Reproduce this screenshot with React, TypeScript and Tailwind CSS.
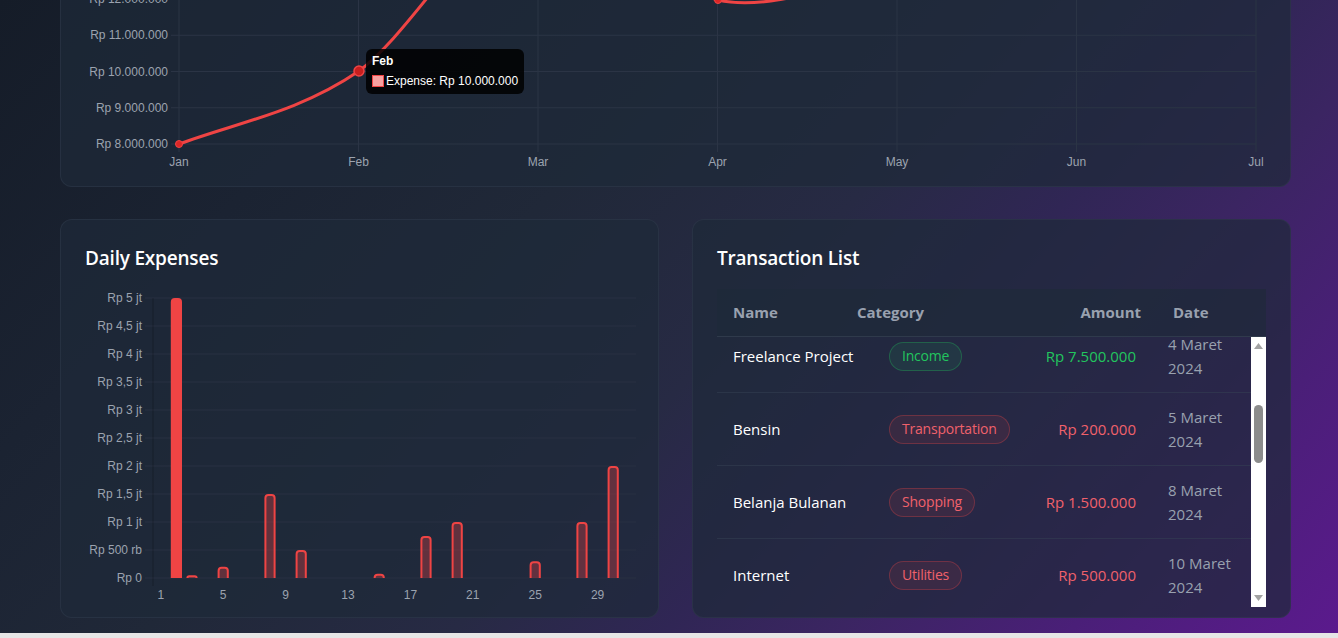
import React from "react";

const months = ["Jan", "Feb", "Mar", "Apr", "May", "Jun", "Jul"];
const monthX = (i: number) => 178 + 179.5 * i;
const valueY = (m: number) => 144 - (m - 8) * 36.25;

// dots as thousand separator, like id-ID
const rupiah = (n: number) => "Rp " + String(n).replace(/\B(?=(\d{3})+(?!\d))/g, ".");

const dayX = (d: number) => 152 + 15.6 * (d - 0.5);
const daily: Record<number, number> = {
  2: 5000000,
  3: 50000,
  5: 200000,
  8: 1500000,
  10: 500000,
  15: 75000,
  18: 750000,
  20: 1000000,
  25: 300000,
  28: 1000000,
  30: 2000000,
};

const dailyTicks = [
  "Rp 0",
  "Rp 500 rb",
  "Rp 1 jt",
  "Rp 1,5 jt",
  "Rp 2 jt",
  "Rp 2,5 jt",
  "Rp 3 jt",
  "Rp 3,5 jt",
  "Rp 4 jt",
  "Rp 4,5 jt",
  "Rp 5 jt",
];

interface Transaction {
  name: string;
  category: string;
  amount: string;
  date: string;
  income?: boolean;
}

const transactions: Transaction[] = [
  { name: "Freelance Project", category: "Income", amount: "Rp 7.500.000", date: "4 Maret 2024", income: true },
  { name: "Bensin", category: "Transportation", amount: "Rp 200.000", date: "5 Maret 2024" },
  { name: "Belanja Bulanan", category: "Shopping", amount: "Rp 1.500.000", date: "8 Maret 2024" },
  { name: "Internet", category: "Utilities", amount: "Rp 500.000", date: "10 Maret 2024" },
];

const chartFont = "'Liberation Sans', Arial, sans-serif";

function MonthlyChart() {
  const line =
    "M178,144 C238,122 298,112 358,71 C418,26 477,-94 537,-91.6 C597,-89.2 680,-8.4 717,0 " +
    "C770,12 836,-19 896,-19.25 C956,-19.5 1016,-100 1076,-109.75 C1136,-120 1195,-140 1255,-146";
  return (
    <div className="relative h-[360px] w-[1183px]">
      <svg width={1183} height={360} viewBox="84 -190 1183 360" fontFamily={chartFont}>
        {[8, 9, 10, 11, 12, 13, 14, 15, 16, 17].map((v) => (
          <g key={v}>
            <line x1={170} x2={1255} y1={valueY(v)} y2={valueY(v)} stroke="#2b3445" strokeWidth={1} />
            <text x={167} y={valueY(v) + 4} textAnchor="end" fontSize={12} fill="#9ca3af">
              {rupiah(v * 1000000)}
            </text>
          </g>
        ))}
        {months.map((m, i) => (
          <g key={m}>
            <line x1={monthX(i)} x2={monthX(i)} y1={-182} y2={152} stroke="#2b3445" strokeWidth={1} />
            <text x={monthX(i)} y={166} textAnchor="middle" fontSize={12} fill="#9ca3af">
              {m}
            </text>
          </g>
        ))}
        <path d={line} fill="none" stroke="#ef4444" strokeWidth={3} />
        <circle cx={178} cy={144} r={3.5} fill="#dc2626" stroke="#ef4444" strokeWidth={1} />
        <circle cx={358} cy={71} r={5} fill="#c81e1e" stroke="#ef4444" strokeWidth={1.5} />
        <circle cx={717} cy={0} r={3.5} fill="#dc2626" stroke="#ef4444" strokeWidth={1} />
      </svg>

      {/* tooltip */}
      <div className="absolute left-[281px] top-[239px] whitespace-nowrap rounded-md bg-black/85 px-[6px] pb-[6px] pt-[5px] font-['Liberation_Sans',Arial,sans-serif] text-[12px] leading-[14px] text-white">
        <div className="mb-[6px] font-bold">Feb</div>
        <div className="flex items-center gap-[2px]">
          <span className="h-[12px] w-[12px] border border-[#ef4444] bg-[#f7a1a1]" />
          <span>Expense: Rp 10.000.000</span>
        </div>
      </div>
    </div>
  );
}

function barPaths(cx: number, value: number) {
  const h = (value / 1000000) * 56;
  const base = 577;
  const x0 = cx - 5.6 + 1;
  const x1 = cx + 5.6 - 1;
  const top = base - h + 1;
  const r = Math.max(0, Math.min(3, h - 1, (x1 - x0) / 2));
  const open = `M${x0},${base} L${x0},${top + r} Q${x0},${top} ${x0 + r},${top} L${x1 - r},${top} Q${x1},${top} ${x1},${top + r} L${x1},${base}`;
  return { open, closed: open + " Z" };
}

function DailyChart() {
  return (
    <svg width={551} height={320} viewBox="84 287 551 320" fontFamily={chartFont}>
      {dailyTicks.map((t, k) => (
        <g key={t}>
          <line x1={144} x2={635.5} y1={577 - k * 28} y2={577 - k * 28} stroke="#283142" strokeWidth={1} />
          <text x={141} y={577 - k * 28 + 4} textAnchor="end" fontSize={12} fill="#9ca3af">
            {t}
          </text>
        </g>
      ))}
      <line x1={152} x2={152} y1={297} y2={585} stroke="rgba(0,0,0,0.22)" strokeWidth={1} />
      {[1, 5, 9, 13, 17, 21, 25, 29].map((d) => (
        <text key={d} x={dayX(d)} y={598} textAnchor="middle" fontSize={12} fill="#9ca3af">
          {d}
        </text>
      ))}
      {Object.entries(daily).map(([day, value]) => {
        const d = Number(day);
        const cx = dayX(d);
        if (d === 2) {
          const h = (value / 1000000) * 56;
          const x0 = cx - 5.6;
          const x1 = cx + 5.6;
          const top = 577 - h;
          return (
            <path
              key={d}
              d={`M${x0},577 L${x0},${top + 4} Q${x0},${top} ${x0 + 4},${top} L${x1 - 4},${top} Q${x1},${top} ${x1},${top + 4} L${x1},577 Z`}
              fill="#ef4444"
            />
          );
        }
        const p = barPaths(cx, value);
        return (
          <g key={d}>
            <path d={p.closed} fill="rgba(239,68,68,0.32)" />
            <path d={p.open} fill="none" stroke="#ef4444" strokeWidth={2} />
          </g>
        );
      })}
    </svg>
  );
}

function Pill({ label, income }: { label: string; income?: boolean }) {
  return (
    <span
      className={
        income
          ? "inline-flex h-[29px] items-center rounded-full border border-[#22c55e]/30 bg-[#22c55e]/10 px-3 text-[14px] tracking-[-0.2px] text-[#22c55e]"
          : "inline-flex h-[29px] items-center rounded-full border border-[#ef4444]/30 bg-[#ef4444]/10 px-3 text-[14px] tracking-[-0.2px] text-[#f0616b]"
      }
    >
      {label}
    </span>
  );
}

function TransactionList() {
  return (
    <div className="flex h-[399px] flex-col rounded-xl border border-gray-700/40 bg-gray-800/70 px-6 pt-6 font-['Open_Sans',sans-serif]">
      <h2 className="mb-[17px] h-7 text-[19px] font-semibold leading-7 tracking-[-0.2px] text-white">Transaction List</h2>
      <div className="grid h-12 grid-cols-[124px_170px_146px_1fr] items-center border-b border-gray-700/70 bg-gray-800/60 text-[15px] font-bold text-gray-400">
        <div className="px-4">Name</div>
        <div className="px-4">Category</div>
        <div className="px-4 text-right">Amount</div>
        <div className="px-4">Date</div>
      </div>
      <div className="flex h-[270px]">
        <div className="flex-1 overflow-hidden">
          <div className="-mt-[17px]">
            {transactions.map((t) => (
              <div
                key={t.name}
                className="grid grid-cols-[156px_150px_129px_1fr] items-center border-b border-gray-700/50 py-3 text-[15px] leading-6"
              >
                <div className="px-4 text-white">{t.name}</div>
                <div className="px-4">
                  <Pill label={t.category} income={t.income} />
                </div>
                <div className={t.income ? "px-4 text-right text-[#22c55e]" : "px-4 text-right text-[#f0616b]"}>
                  {t.amount}
                </div>
                <div className="px-4 text-gray-400">{t.date}</div>
              </div>
            ))}
          </div>
        </div>
        {/* scrollbar */}
        <div className="flex w-[15px] flex-col items-center bg-white pb-[6px] pt-[6px]">
          <svg width={9} height={6} viewBox="0 0 9 6">
            <path d="M4.5 0 L9 6 L0 6 Z" fill="#a3a3a3" />
          </svg>
          <div className="mt-[56px] h-[58px] w-[9px] rounded-full bg-[#8c8c8c]" />
          <div className="flex-1" />
          <svg width={9} height={6} viewBox="0 0 9 6">
            <path d="M0 0 L9 0 L4.5 6 Z" fill="#a3a3a3" />
          </svg>
        </div>
      </div>
    </div>
  );
}

export default function App() {
  return (
    <div className="h-[638px] overflow-hidden bg-[#e6e6e6]">
      <div className="h-[633px] overflow-hidden bg-[linear-gradient(133deg,#151c28_0%,#1b2332_22%,#202838_38%,#272a44_54%,#302655_65%,#3b2562_74%,#4a1f78_86%,#5b1a8d_100%)] pl-[60px] pr-[47px]">
        {/* Monthly chart card, page is scrolled so its top is out of view */}
        <section className="-mt-[259px] rounded-xl border border-gray-700/40 bg-gray-800/70 px-6 pb-4 pt-6 font-['Open_Sans',sans-serif]">
          <h2 className="mb-4 h-7 text-[19px] font-semibold leading-7 tracking-[-0.2px] text-white">Monthly Expenses</h2>
          <MonthlyChart />
        </section>

        <div className="mt-[32px] grid grid-cols-2 gap-[33px]">
          <section className="h-[399px] rounded-xl border border-gray-700/40 bg-gray-800/70 px-6 pt-6 font-['Open_Sans',sans-serif]">
            <h2 className="mb-4 h-7 text-[19px] font-semibold leading-7 tracking-[-0.2px] text-white">Daily Expenses</h2>
            <DailyChart />
          </section>
          <TransactionList />
        </div>
      </div>
    </div>
  );
}
